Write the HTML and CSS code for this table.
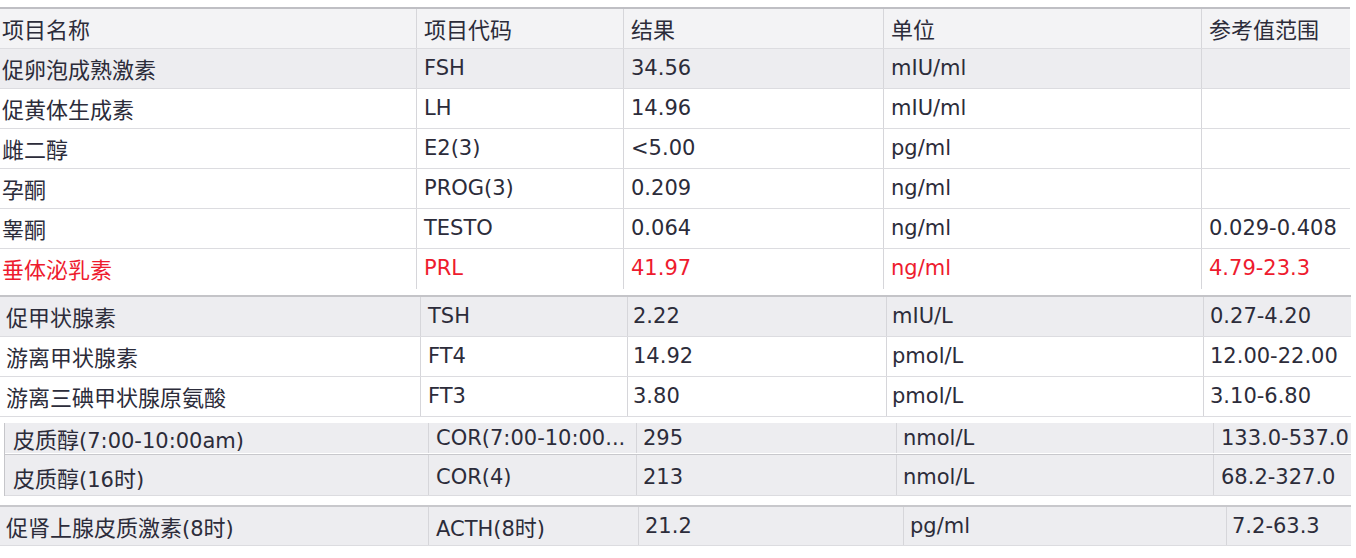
FILE: index.html
```html
<!DOCTYPE html>
<html lang="zh-CN">
<head>
<meta charset="utf-8">
<title>检验结果</title>
<link rel="stylesheet" href="styles.css">
</head>
<body>
<div class="sheet">
  <section class="block b1">
    <div class="row head">
      <div class="cell"><span class="zh">项目名称</span></div>
      <div class="cell"><span class="zh">项目代码</span></div>
      <div class="cell"><span class="zh">结果</span></div>
      <div class="cell"><span class="zh">单位</span></div>
      <div class="cell"><span class="zh">参考值范围</span></div>
    </div>
    <div class="row shade">
      <div class="cell"><span class="zh">促卵泡成熟激素</span></div>
      <div class="cell">FSH</div>
      <div class="cell">34.56</div>
      <div class="cell">mIU/ml</div>
      <div class="cell"></div>
    </div>
    <div class="row">
      <div class="cell"><span class="zh">促黄体生成素</span></div>
      <div class="cell">LH</div>
      <div class="cell">14.96</div>
      <div class="cell">mIU/ml</div>
      <div class="cell"></div>
    </div>
    <div class="row">
      <div class="cell"><span class="zh">雌二醇</span></div>
      <div class="cell">E2(3)</div>
      <div class="cell">&lt;5.00</div>
      <div class="cell">pg/ml</div>
      <div class="cell"></div>
    </div>
    <div class="row">
      <div class="cell"><span class="zh">孕酮</span></div>
      <div class="cell">PROG(3)</div>
      <div class="cell">0.209</div>
      <div class="cell">ng/ml</div>
      <div class="cell"></div>
    </div>
    <div class="row">
      <div class="cell"><span class="zh">睾酮</span></div>
      <div class="cell">TESTO</div>
      <div class="cell">0.064</div>
      <div class="cell">ng/ml</div>
      <div class="cell">0.029-0.408</div>
    </div>
    <div class="row alert last">
      <div class="cell"><span class="zh">垂体泌乳素</span></div>
      <div class="cell">PRL</div>
      <div class="cell">41.97</div>
      <div class="cell">ng/ml</div>
      <div class="cell">4.79-23.3</div>
    </div>
  </section>

  <section class="block b2">
    <div class="row shade">
      <div class="cell"><span class="zh">促甲状腺素</span></div>
      <div class="cell">TSH</div>
      <div class="cell">2.22</div>
      <div class="cell">mIU/L</div>
      <div class="cell">0.27-4.20</div>
    </div>
    <div class="row">
      <div class="cell"><span class="zh">游离甲状腺素</span></div>
      <div class="cell">FT4</div>
      <div class="cell">14.92</div>
      <div class="cell">pmol/L</div>
      <div class="cell">12.00-22.00</div>
    </div>
    <div class="row">
      <div class="cell"><span class="zh">游离三碘甲状腺原氨酸</span></div>
      <div class="cell">FT3</div>
      <div class="cell">3.80</div>
      <div class="cell">pmol/L</div>
      <div class="cell">3.10-6.80</div>
    </div>
  </section>

  <section class="block b3">
    <div class="row shade short">
      <div class="cell"><span class="zh">皮质醇</span>(7:00-10:00am)</div>
      <div class="cell">COR(7:00-10:00...</div>
      <div class="cell">295</div>
      <div class="cell">nmol/L</div>
      <div class="cell">133.0-537.0</div>
    </div>
    <div class="row shade tall">
      <div class="cell"><span class="zh">皮质醇</span>(16<span class="zh">时</span>)</div>
      <div class="cell">COR(4)</div>
      <div class="cell">213</div>
      <div class="cell">nmol/L</div>
      <div class="cell">68.2-327.0</div>
    </div>
  </section>

  <section class="block b4">
    <div class="row shade">
      <div class="cell"><span class="zh">促肾上腺皮质激素</span>(8<span class="zh">时</span>)</div>
      <div class="cell">ACTH(8<span class="zh">时</span>)</div>
      <div class="cell">21.2</div>
      <div class="cell">pg/ml</div>
      <div class="cell">7.2-63.3</div>
    </div>
  </section>
</div>
</body>
</html>
```

FILE: styles.css
```css
html, body {
  margin: 0;
  padding: 0;
  background: #ffffff;
}

body {
  font-family: "DejaVu Sans", "Noto Sans CJK SC", sans-serif;
  font-size: 21px;
  color: #2c2c3a;
}

.sheet {
  display: flex;
  flex-direction: column;
  align-items: flex-start;
}

.zh {
  font-family: "Noto Sans CJK SC", sans-serif;
  font-size: 22px;
}

.block {
  display: flex;
  flex-direction: column;
}

.row {
  display: grid;
  background: #ffffff;
  border-bottom: 1px solid #dcdce0;
}

.row.shade {
  background: #ededf0;
}

.row.head {
  background: #f3f3f5;
}

.cell {
  height: 39px;
  line-height: 39px;
  padding-left: 7px;
  border-right: 1px solid #d6d6da;
  white-space: nowrap;
  overflow: hidden;
}

.cell:last-child {
  border-right: none;
}

/* block 1 */
.b1 {
  margin-top: 7px;
  border-top: 2px solid #bfbfc4;
}

.b1 .row {
  grid-template-columns: 417px 207px 260px 318px 148px;
}

.b1 .cell:first-child {
  padding-left: 2px;
}

.row.last {
  border-bottom: none;
}

.row.last .cell {
  height: 40px;
}

.row.alert {
  color: #ee1b2e;
}

/* block 2 */
.b2 {
  margin-top: 6px;
  border-top: 2px solid #c4c4c8;
}

.b2 .row {
  grid-template-columns: 421px 207px 259px 317px 147px;
}

.b2 .cell:nth-child(1) { padding-left: 6px; }
.b2 .cell:nth-child(2) { padding-left: 7px; }
.b2 .cell:nth-child(3) { padding-left: 5px; }
.b2 .cell:nth-child(4) { padding-left: 5px; }
.b2 .cell:nth-child(5) { padding-left: 6px; }

/* block 3 */
.b3 {
  margin-top: 6px;
  margin-left: 4px;
  border-left: 1px solid #c6c6ca;
}

.b3 .row {
  grid-template-columns: 424px 208px 260px 317px 137px;
}

.b3 .row.short {
  border-bottom: 1px solid #ffffff;
}

.b3 .row.short .cell {
  height: 30px;
  line-height: 30px;
}

.b3 .row.tall {
  border-top: 1px solid #c8c8cc;
}

.b3 .row.tall .cell {
  height: 40px;
  line-height: 44px;
}

.b3 .cell:nth-child(1) { padding-left: 8px; }
.b3 .cell:nth-child(2) { padding-left: 7px; }
.b3 .cell:nth-child(3) { padding-left: 6px; }
.b3 .cell:nth-child(4) { padding-left: 6px; }
.b3 .cell:nth-child(5) { padding-left: 7px; }

/* block 4 */
.b4 {
  margin-top: 9px;
  border-top: 2px solid #c8c8cc;
}

.b4 .row {
  grid-template-columns: 429px 210px 265px 323px 124px;
}

.b4 .cell {
  height: 38px;
  line-height: 38px;
}

.b4 .cell:nth-child(1) { padding-left: 6px; }
.b4 .cell:nth-child(2) { padding-left: 7px; }
.b4 .cell:nth-child(3) { padding-left: 6px; }
.b4 .cell:nth-child(4) { padding-left: 6px; }
.b4 .cell:nth-child(5) { padding-left: 5px; }
```
